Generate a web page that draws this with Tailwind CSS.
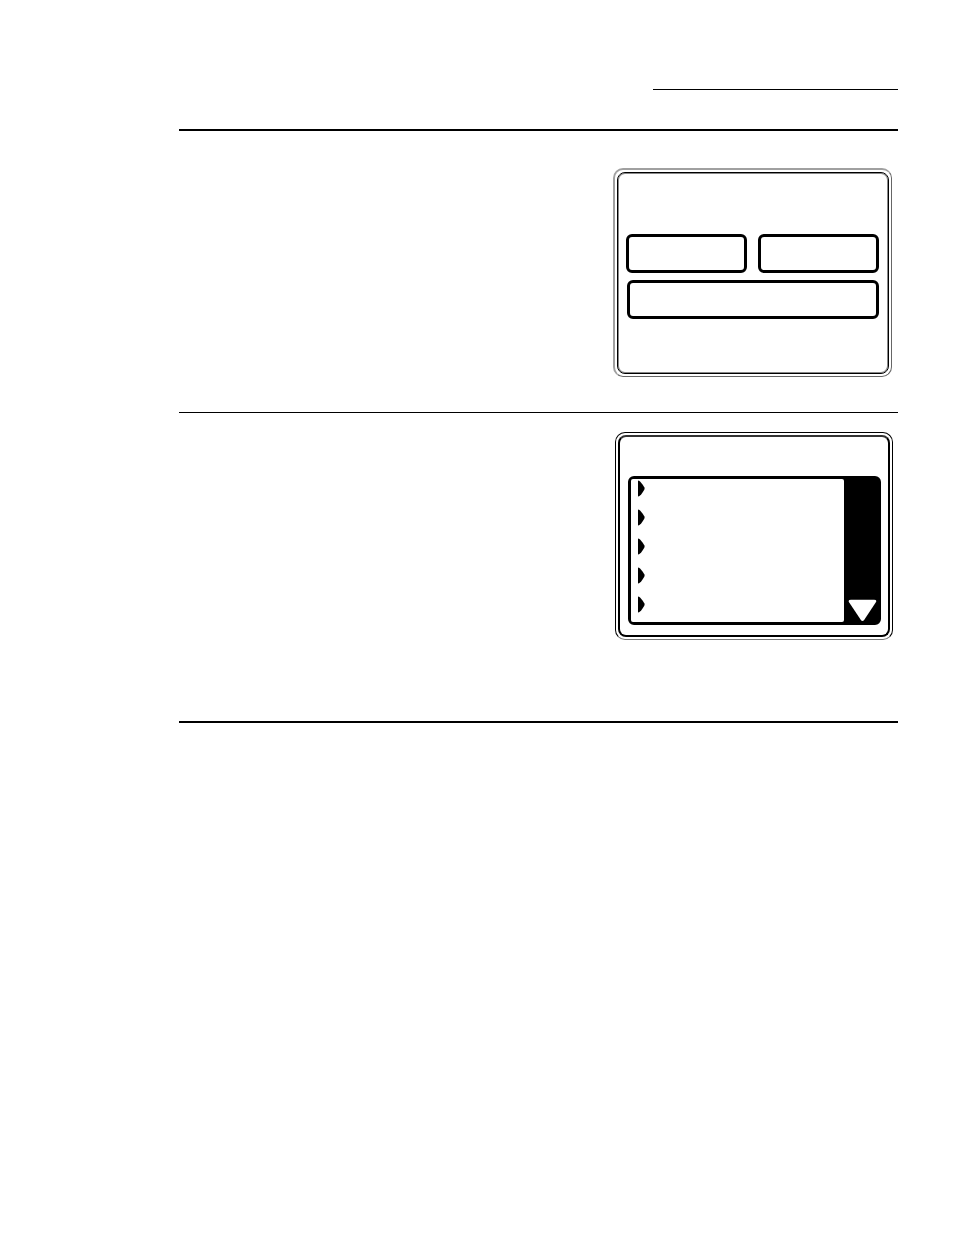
<!DOCTYPE html>
<html lang="en">
<head>
<meta charset="utf-8">
<meta name="viewport" content="width=device-width, initial-scale=1">
<title>Manual page</title>
<script src="https://cdn.jsdelivr.net/npm/@tailwindcss/browser@4"></script>
</head>
<body class="bg-white font-['Liberation_Sans',sans-serif] text-black">
<main class="flex min-h-screen flex-col pt-[89px] pr-14 pl-[179px]">
  <header class="flex h-10 justify-end">
    <div class="h-px w-[245px] bg-black"></div>
  </header>

  <section class="flex justify-end border-t-2 border-black pt-[37px] pr-[6px] pb-[35px]">
    <!-- Touch panel with three keys -->
    <div class="w-[279px] rounded-[10px] border border-t-2 border-l-2 border-[#666] border-t-[#a0a0a0] border-l-[#a0a0a0] p-[2px]">
      <div class="rounded-lg border border-black pt-[61px] pr-[9px] pb-[54px] pl-2 shadow-[inset_0_0_0_1px_#888]">
        <div class="flex justify-between gap-[11px]">
          <button type="button" aria-label="Left key" class="h-[39px] flex-1 rounded-md border-3 border-black bg-white"></button>
          <button type="button" aria-label="Right key" class="h-[39px] flex-1 rounded-md border-3 border-black bg-white"></button>
        </div>
        <div class="flex pt-[7px] pl-px">
          <button type="button" aria-label="Wide key" class="h-[39px] flex-1 rounded-md border-3 border-black bg-white"></button>
        </div>
      </div>
    </div>
  </section>

  <section class="flex justify-end border-t border-black pt-[19px] pr-[5px] pb-[81px]">
    <!-- Touch panel with a scrolling list -->
    <div class="w-[278px] rounded-[10px] border border-black border-b-[#777] p-[2px]">
      <div class="rounded-lg border-2 border-black border-t-[#333] pt-[39px] pr-[7px] pb-[10px] pl-2">
        <div class="flex rounded-md border-3 border-black bg-black">
          <ul class="flex flex-1 flex-col gap-3 rounded-[2px] bg-white pt-px pb-[9px] pl-[7px]">
            <li><svg class="block" width="7" height="17" viewBox="0 0 7 17"><path d="M0 1.2Q0 .2 1 .7Q3 1.8 6.3 7.3Q7 8.5 6.3 9.7Q3 15.2 1 16.3Q0 16.8 0 15.8Z"/></svg></li>
            <li><svg class="block" width="7" height="17" viewBox="0 0 7 17"><path d="M0 1.2Q0 .2 1 .7Q3 1.8 6.3 7.3Q7 8.5 6.3 9.7Q3 15.2 1 16.3Q0 16.8 0 15.8Z"/></svg></li>
            <li><svg class="block" width="7" height="17" viewBox="0 0 7 17"><path d="M0 1.2Q0 .2 1 .7Q3 1.8 6.3 7.3Q7 8.5 6.3 9.7Q3 15.2 1 16.3Q0 16.8 0 15.8Z"/></svg></li>
            <li><svg class="block" width="7" height="17" viewBox="0 0 7 17"><path d="M0 1.2Q0 .2 1 .7Q3 1.8 6.3 7.3Q7 8.5 6.3 9.7Q3 15.2 1 16.3Q0 16.8 0 15.8Z"/></svg></li>
            <li><svg class="block" width="7" height="17" viewBox="0 0 7 17"><path d="M0 1.2Q0 .2 1 .7Q3 1.8 6.3 7.3Q7 8.5 6.3 9.7Q3 15.2 1 16.3Q0 16.8 0 15.8Z"/></svg></li>
          </ul>
          <div class="flex w-[34px] items-end pl-1">
            <button type="button" aria-label="Scroll down">
              <svg class="block" width="29" height="23" viewBox="0 0 29 23"><path fill="#fff" d="M3 .7H26Q29.5 .7 27.7 3.6L16.3 20.8Q14.5 23.4 12.7 20.8L1.2 3.6Q-.5 .7 3 .7Z"/></svg>
            </button>
          </div>
        </div>
      </div>
    </div>
  </section>

  <div class="h-[2px] bg-black"></div>
</main>
</body>
</html>
